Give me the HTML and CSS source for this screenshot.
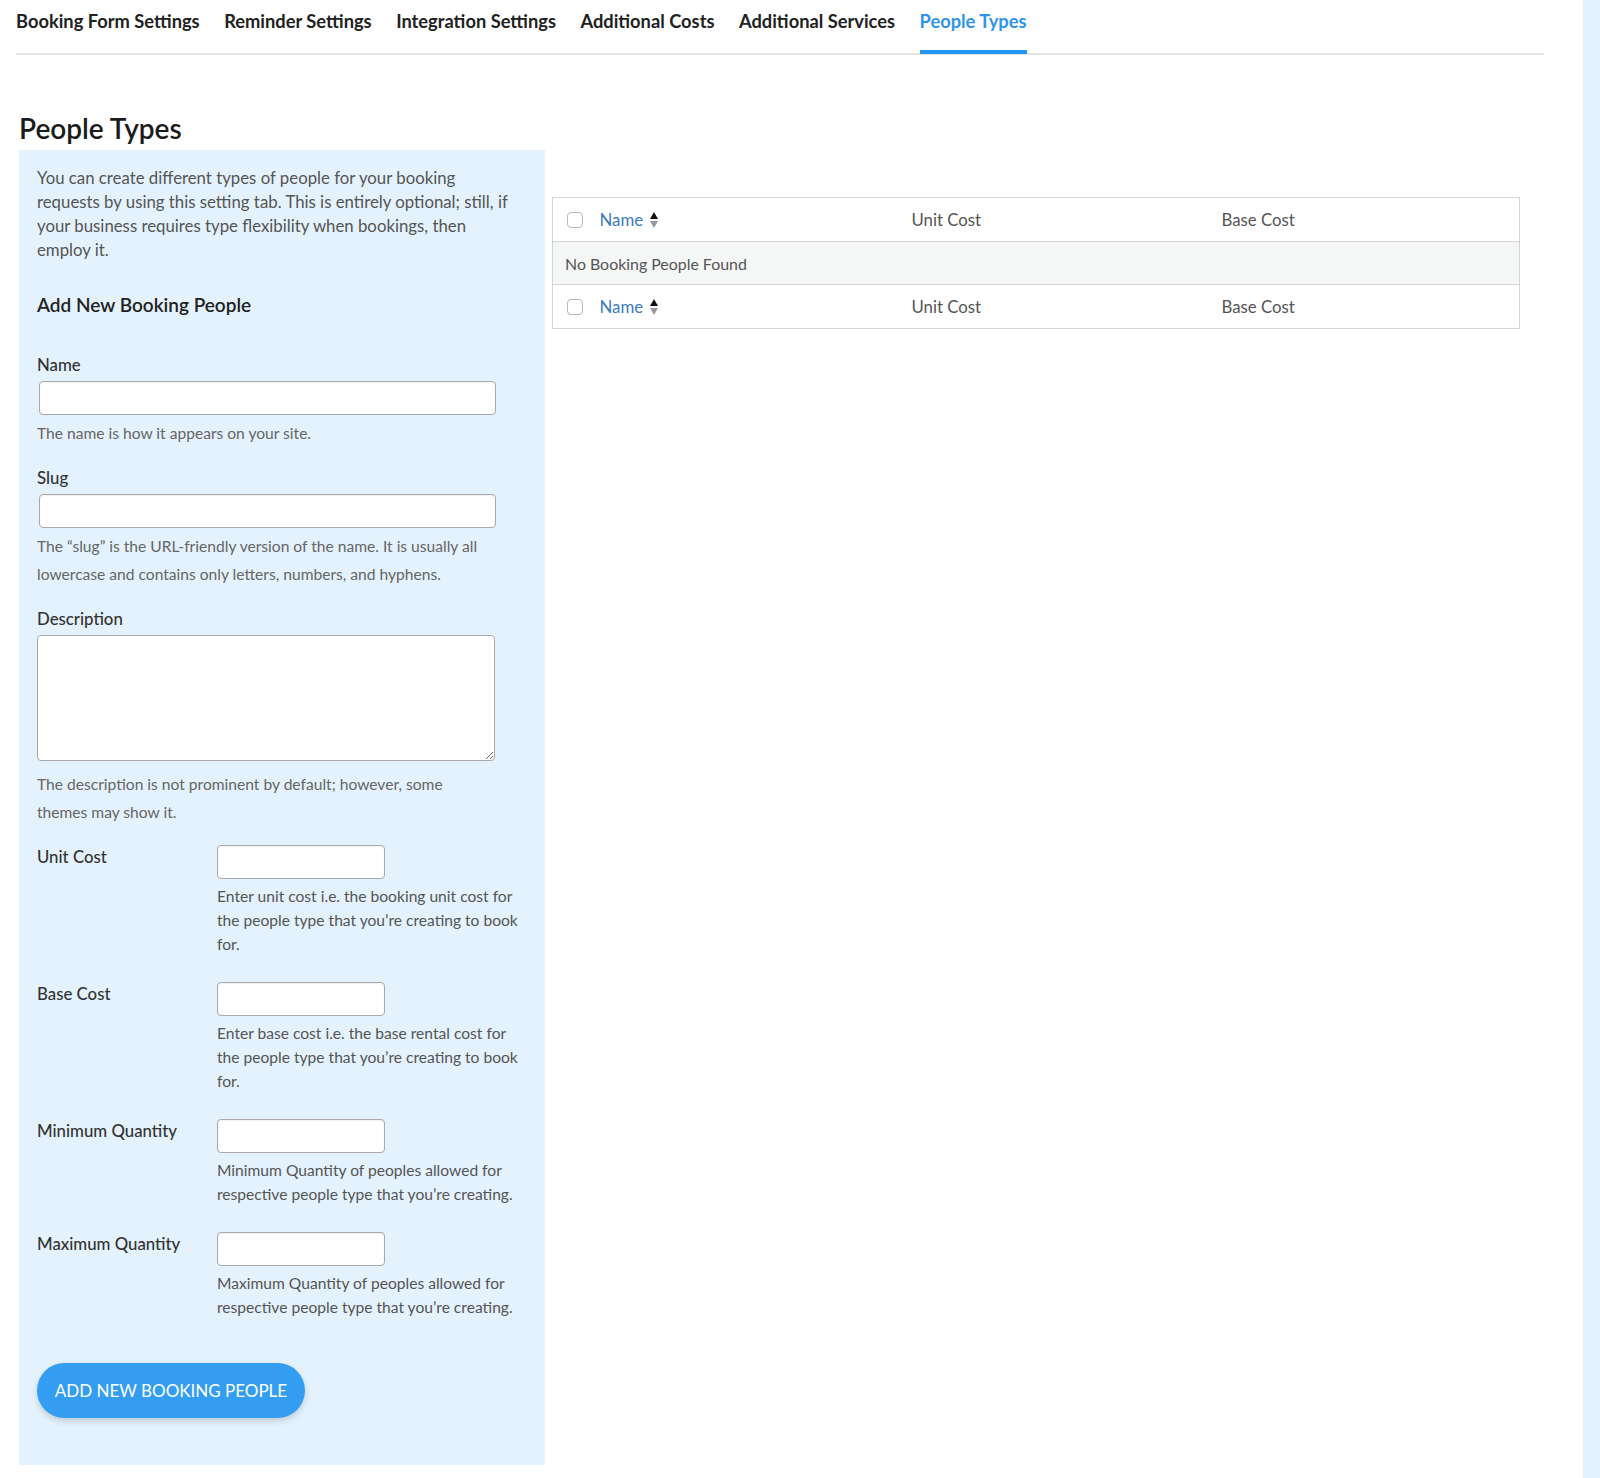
FILE: index.html
```html
<!DOCTYPE html>
<html lang="en">
<head>
<meta charset="utf-8">
<title>People Types</title>
<link rel="stylesheet" href="styles.css">
</head>
<body>
<div class="page">
  <main class="main">
    <nav class="tabs">
      <a class="tab">Booking Form Settings</a>
      <a class="tab">Reminder Settings</a>
      <a class="tab">Integration Settings</a>
      <a class="tab">Additional Costs</a>
      <a class="tab">Additional Services</a>
      <a class="tab active">People Types</a>
    </nav>

    <div class="content">
      <div class="left">
        <h1 class="title">People Types</h1>
        <section class="panel">
          <p class="intro">You can create different types of people for your booking requests by using this setting tab. This is entirely optional; still, if your business requires type flexibility when bookings, then employ it.</p>
          <h2 class="subtitle">Add New Booking People</h2>

          <div class="field">
            <label class="label">Name</label>
            <input class="input wide" type="text">
            <p class="help">The name is how it appears on your site.</p>
          </div>

          <div class="field">
            <label class="label">Slug</label>
            <input class="input wide" type="text">
            <p class="help">The “slug” is the URL-friendly version of the name. It is usually all lowercase and contains only letters, numbers, and hyphens.</p>
          </div>

          <div class="field">
            <label class="label">Description</label>
            <textarea class="textarea"></textarea>
            <p class="help desc-help">The description is not prominent by default; however, some themes may show it.</p>
          </div>

          <div class="row first-row">
            <label class="row-label">Unit Cost</label>
            <div class="row-body">
              <input class="input small" type="text">
              <p class="row-help">Enter unit cost i.e. the booking unit cost for the people type that you’re creating to book for.</p>
            </div>
          </div>

          <div class="row">
            <label class="row-label">Base Cost</label>
            <div class="row-body">
              <input class="input small" type="text">
              <p class="row-help">Enter base cost i.e. the base rental cost for the people type that you’re creating to book for.</p>
            </div>
          </div>

          <div class="row">
            <label class="row-label">Minimum Quantity</label>
            <div class="row-body">
              <input class="input small" type="text">
              <p class="row-help">Minimum Quantity of peoples allowed for respective people type that you’re creating.</p>
            </div>
          </div>

          <div class="row">
            <label class="row-label">Maximum Quantity</label>
            <div class="row-body">
              <input class="input small" type="text">
              <p class="row-help">Maximum Quantity of peoples allowed for respective people type that you’re creating.</p>
            </div>
          </div>

          <button class="btn" type="button">ADD NEW BOOKING PEOPLE</button>
        </section>
      </div>

      <div class="right">
        <table class="list">
          <colgroup>
            <col class="c-check"><col class="c-name"><col class="c-unit"><col class="c-base">
          </colgroup>
          <thead>
            <tr>
              <th class="cb"><span class="checkbox"></span></th>
              <th><span class="sortable">Name <span class="sort"><i class="up"></i><i class="down"></i></span></span></th>
              <th>Unit Cost</th>
              <th>Base Cost</th>
            </tr>
          </thead>
          <tbody>
            <tr class="empty"><td colspan="4">No Booking People Found</td></tr>
          </tbody>
          <tfoot>
            <tr>
              <th class="cb"><span class="checkbox"></span></th>
              <th><span class="sortable">Name <span class="sort"><i class="up"></i><i class="down"></i></span></span></th>
              <th>Unit Cost</th>
              <th>Base Cost</th>
            </tr>
          </tfoot>
        </table>
      </div>
    </div>
  </main>
  <aside class="strip"></aside>
</div>
</body>
</html>
```

FILE: styles.css
```css
* { box-sizing: border-box; }
html, body { margin: 0; padding: 0; }
body {
  font-family: Lato, "Open Sans", "Liberation Sans", sans-serif;
  color: #333;
  background: #fff;
}
.page {
  display: flex;
  min-height: 1478px;
}
.main {
  flex: 1;
  padding: 0 39px 0 16px;
}
.strip {
  width: 17px;
  background: #e3f1fd;
}

/* Tabs */
.tabs {
  display: flex;
  gap: 24.5px;
  height: 55px;
  border-bottom: 2px solid #e4e4e4;
}
.tab {
  display: block;
  height: 54px;
  padding-top: 10px;
  font-size: 18.3px;
  line-height: 22px;
  font-weight: 700;
  color: #222;
  text-decoration: none;
}
.tab.active {
  color: #2f95ec;
  border-bottom: 4px solid #2196f3;
}

/* Content */
.content {
  display: flex;
  align-items: flex-start;
  gap: 7px;
  margin-left: 3px;
}
.left { width: 526px; }
.right {
  width: 967px;
  padding-top: 142px;
}
.title {
  margin: 56px 0 5px;
  font-size: 28px;
  line-height: 34px;
  font-weight: 600;
  color: #1b1b1b;
}
.panel {
  background: #e3f2fd;
  padding: 16px 18px 47px 18px;
}
.intro {
  margin: 0;
  max-width: 482px;
  font-size: 16.8px;
  line-height: 24px;
  color: #555;
}
.subtitle {
  margin: 31px 0 0;
  font-size: 19px;
  line-height: 24px;
  font-weight: 600;
  color: #222;
}
.field { margin-top: 19px; }
.field:first-of-type { margin-top: 36px; }
.label {
  display: block;
  font-size: 16.8px;
  line-height: 24px;
  font-weight: 500;
  color: #333;
  margin-bottom: 4px;
}
.input {
  display: block;
  height: 34px;
  background: #fff;
  border: 1px solid #a9a9a9;
  border-radius: 4px;
  box-shadow: inset 0 1px 2px rgba(0,0,0,0.06);
  font: inherit;
  padding: 0 8px;
}
.input.wide { width: 457px; margin-left: 2px; }
.input.small { width: 168px; }
.textarea {
  display: block;
  width: 458px;
  height: 126px;
  border: 1px solid #a9a9a9;
  border-radius: 4px;
  background: #fff;
  font: inherit;
  resize: both;
}
.help {
  margin: 4px 0 0;
  max-width: 450px;
  font-size: 15.6px;
  line-height: 28px;
  color: #666;
}
.desc-help { margin-top: 9px; }

.row {
  display: flex;
  align-items: flex-start;
  margin-top: 26px;
}
.first-row { margin-top: 19px; }
.row-label {
  width: 180px;
  flex: none;
  font-size: 16.8px;
  line-height: 24px;
  font-weight: 500;
  color: #333;
}
.row-body { flex: 1; }
.row-help {
  margin: 5px 0 0;
  font-size: 15.6px;
  line-height: 24px;
  color: #555;
}

.btn {
  display: block;
  margin-top: 44px;
  width: 268px;
  height: 55px;
  border: none;
  border-radius: 28px;
  background: #339df2;
  color: #fff;
  font-family: inherit;
  font-size: 17px;
  font-weight: 400;
  box-shadow: 0 3px 6px rgba(0,0,0,0.16);
}

/* Table */
.list {
  width: 967px;
  border-collapse: collapse;
  table-layout: fixed;
  border: 1px solid #d5d5d5;
  background: #fff;
}
.c-check { width: 37px; }
.c-name { width: 312px; }
.c-unit { width: 310px; }
.c-base { width: 308px; }
.list th {
  text-align: left;
  font-weight: 400;
  font-size: 16.8px;
  color: #555;
  height: 44px;
  padding: 0 10px;
  vertical-align: middle;
}
.list th.cb { padding: 0 0 0 14px; }
.list thead tr { border-bottom: 1px solid #d5d5d5; }
.list tfoot tr { border-top: 1px solid #d5d5d5; }
.checkbox {
  display: block;
  width: 16px;
  height: 16px;
  border: 1px solid #b4b9be;
  border-radius: 4px;
  background: #fff;
}
.sortable { color: #3b7bbf; display: inline-flex; align-items: center; gap: 7px; }
.sort {
  display: inline-flex;
  flex-direction: column;
  gap: 2px;
}
.sort i {
  display: block;
  width: 0;
  height: 0;
  border-left: 4.5px solid transparent;
  border-right: 4.5px solid transparent;
}
.sort .up { border-bottom: 7px solid #111; }
.sort .down { border-top: 7px solid #999; }
.empty td {
  background: #f5f6f6;
  height: 43px;
  padding: 0 12px;
  font-size: 15.9px;
  color: #555;
}
```
